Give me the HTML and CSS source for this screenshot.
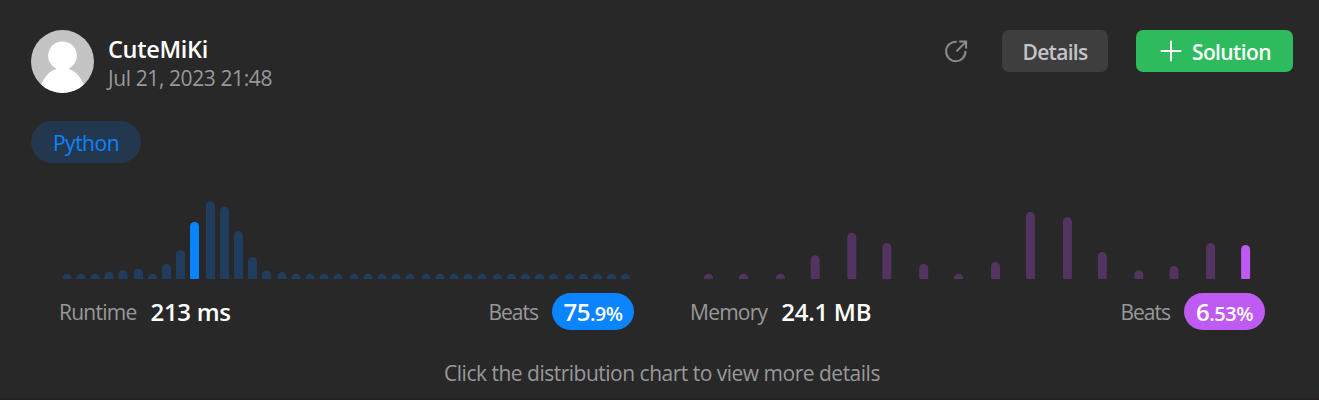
FILE: index.html
```html
<!DOCTYPE html>
<html lang="en">
<head>
<meta charset="utf-8">
<title>Submission</title>
<link rel="stylesheet" href="styles.css">
</head>
<body>
<main class="panel">
  <header class="header">
    <svg class="avatar" viewBox="0 0 63 63"><defs><clipPath id="c"><circle cx="31.5" cy="31.5" r="31.5"/></clipPath></defs><g clip-path="url(#c)"><path fill="#c4c4c4" d="M0 0h63v63H0z"/><circle cx="31.5" cy="25.7" r="14.3" fill="#fff"/><path fill="#fff" d="M25 36h13v5H25zM9 58C13 46 20 38 31.5 38S50 46 54 58v6H9z"/></g></svg>
    <div class="user">
      <div class="name"><span>CuteMiKi</span></div>
      <div class="date"><span>Jul 21, 2023 21:48</span></div>
    </div>
    <svg class="share" viewBox="0 0 24 24" fill="none" stroke="#8c8c8c" stroke-width="2"><path d="M12.8 2.8A9.7 9.7 0 1 0 21.500 12M12.500 12.400 21.300 3.400M15.200 2.500H22.100V9.600"/></svg>
    <button class="btn details"><span>Details</span></button>
    <button class="btn solution"><svg class="plus" viewBox="0 0 22 22"><path d="M11 1.500V20.500M1.500 11H20.500" stroke="#fff" stroke-width="2" stroke-linecap="round"/></svg><span>Solution</span></button>
  </header>
  <div class="tag"><span>Python</span></div>
  <section class="charts">
    <article class="metric runtime">
      <svg class="bars" viewBox="59 199 575 80">
        <path class="dim" d="M67 278.2v5M81 278.2v5M95 278.2v5M109 276.5v7M123 274.8v8M138.500 273.200v10M152.500 278.200v5M166.500 268.500v15M180.500 254.500v30M210.500 205.800v80M224.500 211.200v80M238.500 235.500v50M252.500 261.500v30M266.500 274.800v9M282 276.500v7M296 278.200v5M310 278.200v5M324 278.200v5M338 278.200v5M354 278.200v5M368 278.200v5M382 278.200v5M396 278.200v5M410 278.200v5M426 278.200v5M440 278.200v5M454 278.200v5M468 278.200v5M482 278.200v5M497.500 278.200v5M511.500 278.200v5M525.500 278.200v5M539.500 278.200v5M553.500 278.200v5M569.500 278.200v5M583.500 278.200v5M597.500 278.200v5M611.500 278.200v5M625.500 278.200v5"/>
        <path class="active" d="M194.500 226.500V277"/>
      </svg>
      <div class="stats"><span class="label"><span>Runtime</span></span><span class="value"><span>213 ms</span></span><span class="label beats"><span>Beats</span></span><span class="badge"><b>75</b><small>.9%</small></span></div>
    </article>
    <article class="metric memory">
      <svg class="bars" viewBox="690 199 575 80">
        <path class="dim" d="M708.500 278.200v5M743.500 278.200v5M780.500 278.200v5M815.200 259.800V277M851.800 237.200V277M886.800 247.500V277M923.700 268.500V277M958.500 278.200v5M995.500 266.500V277M1030.400 216.500V277M1067.400 221.700V277M1102.300 256.500V277M1138.800 274.800V277M1174 270.500V277M1210.600 247.500V277"/>
        <path class="active" d="M1245.600 249.500V277"/>
      </svg>
      <div class="stats"><span class="label"><span>Memory</span></span><span class="value"><span>24.1 MB</span></span><span class="label beats"><span>Beats</span></span><span class="badge"><b>6</b><small>.53%</small></span></div>
    </article>
  </section>
  <p class="hint"><span>Click the distribution chart to view more details</span></p>
</main>
</body>
</html>
```
FILE: styles.css
```css
* { box-sizing: border-box; }
body { margin: 0; background: #282828; }
.panel { height: 400px; padding: 30px 26px 0 31px; border-bottom: 2px solid #231f20; font: 21px/28px "Open Sans", "Noto Sans", sans-serif; color: #98989c; letter-spacing: -0.5px; white-space: nowrap; overflow: hidden; }
.header { display: flex; height: 63px; align-items: flex-start; }
.avatar { width: 63px; height: 63px; margin-right: 14px; }
.user { flex: 1; padding-top: 5px; }
.name { color: #fff; font-size: 23.500px; font-weight: 650; line-height: 29px; letter-spacing: -0.3px; }
.date { letter-spacing: -0.4px; }
.share { width: 24px; height: 24px; margin: 9px 34px 0 0; }
.btn { display: flex; align-items: center; justify-content: center; height: 42px; padding: 2px 0 0; border: 0; border-radius: 7px; font: inherit; font-weight: 630; letter-spacing: -0.7px; }
.details { width: 106px; margin-right: 28px; background: #3e3e3e; color: #c4c4c8; }
.solution { width: 157px; padding-left: 2px; background: #2dbb5d; color: #fff; gap: 10px; letter-spacing: -0.6px; }
.plus { width: 22px; height: 22px; margin-top: -2px; }
.tag { display: flex; justify-content: center; width: 110px; height: 42px; margin-top: 28px; padding-top: 8px; border-radius: 21px; background: #23384f; color: #0a84ff; font-weight: 480; }
.charts { display: flex; gap: 56px; margin: 36px 28px 0; }
.metric { width: 575px; }
.bars { display: block; width: 575px; height: 80px; overflow: hidden; }
.bars path { fill: none; stroke-width: 9; stroke-linecap: round; }
.runtime .dim { stroke: #203d5d; }
.runtime .active { stroke: #0a84ff; }
.memory .dim { stroke: #533460; }
.memory .active { stroke: #bf5af2; }
.stats { display: flex; align-items: center; height: 37px; margin-top: 14px; }
.label { letter-spacing: -0.75px; }
.value { margin-left: 14px; padding-top: 1px; color: #fff; font-size: 24px; font-weight: 650; letter-spacing: -0.3px; }
.beats { margin-left: auto; letter-spacing: -1px; }
.badge { display: flex; align-items: baseline; justify-content: center; width: 82px; height: 37px; margin-left: 14px; padding-top: 5px; border-radius: 19px; background: #0a84ff; color: #fff; }
.memory .badge { width: 81px; background: #bf5af2; }
.badge b { font-size: 24px; font-weight: 650; }
.badge small { font-size: 20px; font-weight: 650; }
.hint { margin: 29px 0 0; text-align: center; }
```
